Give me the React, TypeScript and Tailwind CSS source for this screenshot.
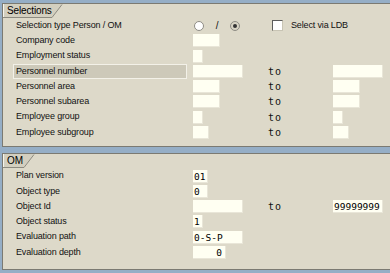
import React from 'react';

type Row = { label: string; w1?: number; w2?: number; v1?: string; v2?: string; right?: boolean; hl?: boolean; tall?: boolean };

const selRows: Row[] = [
    { label: 'Company code', w1: 27 },
    { label: 'Employment status', w1: 10, tall: true },
    { label: 'Personnel number', w1: 50, w2: 50, hl: true },
    { label: 'Personnel area', w1: 27, w2: 27 },
    { label: 'Personnel subarea', w1: 27, w2: 27 },
    { label: 'Employee group', w1: 10, w2: 10, tall: true },
    { label: 'Employee subgroup', w1: 16, w2: 16 },
];

const omRows: Row[] = [
    { label: 'Plan version', w1: 15, v1: '01', tall: true },
    { label: 'Object type', w1: 15, v1: '0' },
    { label: 'Object Id', w1: 50, w2: 50, v2: '99999999' },
    { label: 'Object status', w1: 10, v1: '1' },
    { label: 'Evaluation path', w1: 50, v1: '0-S-P', tall: true },
    { label: 'Evaluation depth', w1: 33, v1: '0', right: true },
];

const Field = ({ w, v, right }: { w: number; v?: string; right?: boolean }) => (
    <div style={{ width: w }} className={`h-[13px] bg-[#fffff2] border-b border-r border-[#e9e6d8] text-[9.5px] leading-[13px] tracking-normal text-black px-[1px] font-['DejaVu_Sans_Mono',monospace] overflow-hidden whitespace-nowrap ${right ? 'text-right pr-[3px]' : ''}`}>{v}</div>
);

const Tab = ({ text, w }: { text: string; w: number }) => (
    <div className="relative h-[14px]">
        <svg className="absolute left-0 top-0" width={w + 12} height={14}>
            <polygon points={`0,0 ${w + 11},0 ${w + 1},13 0,13`} fill="#d3cfbf" />
            <polyline points={`0,13.5 ${w + 1},13.5 ${w + 11},0.5`} fill="none" stroke="#8c8a80" strokeWidth="1" />
            <line x1="0.5" y1="0" x2="0.5" y2="13" stroke="#f6f4ec" />
        </svg>
        <span className="absolute left-[4px] top-0 text-[10px] leading-[14px] text-black">{text}</span>
    </div>
);

const FormRow = ({ r }: { r: Row }) => (
    <div className={`flex items-center ${r.tall ? 'h-[16px]' : 'h-[15px]'}`}>
        <div className="w-[177px] h-[15px] flex items-center">
            {r.hl ? (
                <div className="-ml-[3px] w-[174px] h-[15px] pl-[2px] bg-[#cdc9b9] border border-[#f3f1e8] flex items-center">{r.label}</div>
            ) : r.label}
        </div>
        <div className="w-[75px]">{r.w1 && <Field w={r.w1} v={r.v1} right={r.right} />}</div>
        {r.w2 && (
            <>
                <div className="w-[65px] font-['DejaVu_Sans_Mono',monospace] text-[10px] tracking-[1px]">to</div>
                <Field w={r.w2} v={r.v2} />
            </>
        )}
    </div>
);

export default function App() {
    return (
        <div className="w-[390px] h-[273px] bg-[#95aec6] pt-[3px] overflow-hidden font-['Liberation_Sans',Arial,sans-serif] text-[9px] tracking-[-0.15px] text-[#111]">
            <div className="ml-[2px] h-[144px] bg-[#ddd9c9] border-t border-l border-b border-[#7b7a72]">
                <Tab text="Selections" w={48} />
                <div className="pl-[13px]">
                    <div className="flex items-center h-[15px]">
                        <div className="w-[178px]">Selection type Person / OM</div>
                        <div className="w-[10px] h-[10px] rounded-full bg-white border border-[#8e8c84]" />
                        <div className="w-[26px] text-center text-[10px]">/</div>
                        <div className="w-[10px] h-[10px] rounded-full bg-[#d8d4c4] border border-[#8e8c84] flex items-center justify-center">
                            <div className="w-[4px] h-[4px] rounded-full bg-[#333]" />
                        </div>
                        <div className="w-[32px]" />
                        <div className="w-[11px] h-[11px] bg-white border-t border-l border-[#5c5c5c] border-r border-b border-r-[#c8c4b4] border-b-[#c8c4b4]" />
                        <div className="pl-[8px]">Select via LDB</div>
                    </div>
                    {selRows.map((r) => <FormRow key={r.label} r={r} />)}
                </div>
            </div>
            <div className="ml-[2px] mt-[6px] h-[117px] bg-[#ddd9c9] border-t border-l border-b border-[#7b7a72]">
                <Tab text="OM" w={20} />
                <div className="pl-[13px]">
                    {omRows.map((r) => <FormRow key={r.label} r={r} />)}
                </div>
            </div>
        </div>
    );
}
